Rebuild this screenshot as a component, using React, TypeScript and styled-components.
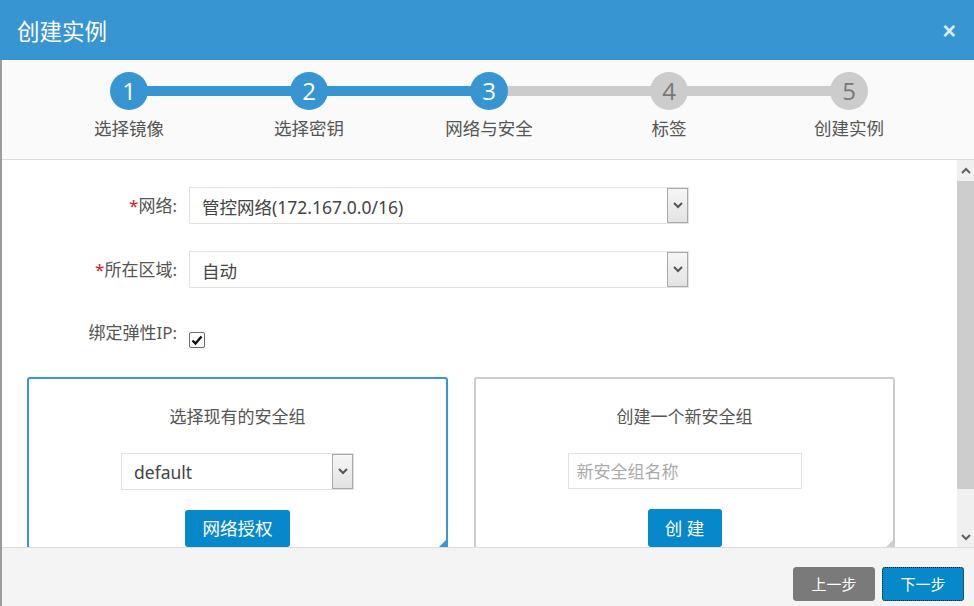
import React from "react";
import styled, { createGlobalStyle, css } from "styled-components";

const GlobalStyle = createGlobalStyle`
  html, body { margin: 0; padding: 0; background: #fff; }
  body {
    font-family: "Noto Sans", "Noto Sans CJK SC", "Liberation Sans", sans-serif;
    color: #555;
  }
  * { box-sizing: border-box; }
`;

const BLUE = "#3795d1";
const BTN = "#0788cb";

const Modal = styled.div`
  width: 974px;
  height: 606px;
  display: flex;
  flex-direction: column;
  overflow: hidden;
  background: #fff;
`;

const Header = styled.header`
  height: 60px;
  flex: none;
  background: ${BLUE};
  display: flex;
  align-items: center;
  justify-content: space-between;
  padding: 0 18px 0 17px;
`;

const Title = styled.h1`
  margin: 0;
  font-size: 22.5px;
  font-weight: 400;
  line-height: 30px;
  color: #fff;
  padding-top: 4px;
`;

const Close = styled.span`
  font-family: "Liberation Sans", "DejaVu Sans", sans-serif;
  font-size: 23px;
  font-weight: 700;
  line-height: 24px;
  color: rgba(255, 255, 255, 0.82);
  padding-top: 2px;
`;

const Main = styled.div`
  flex: 1;
  min-height: 0;
  display: flex;
  flex-direction: column;
  border-left: 2px solid #9c9c9c;
`;

const Steps = styled.nav`
  height: 100px;
  flex: none;
  background: #fafafa;
  border-bottom: 1px solid #dcdcdc;
  display: grid;
  grid-template-columns: repeat(5, 180px);
  padding: 12px 0 0 37px;
`;

const Step = styled.div<{ $line?: "done" | "todo" }>`
  position: relative;
  display: flex;
  flex-direction: column;
  align-items: center;
  ${(p) =>
    p.$line &&
    css`
      &::after {
        content: "";
        position: absolute;
        top: 14px;
        left: 50%;
        width: 100%;
        height: 10px;
        background: ${p.$line === "done" ? BLUE : "#cccccc"};
        z-index: 0;
      }
    `}
`;

const Circle = styled.div<{ $done: boolean }>`
  position: relative;
  z-index: 1;
  width: 38px;
  height: 38px;
  border-radius: 50%;
  background: ${(p) => (p.$done ? BLUE : "#cccccc")};
  color: ${(p) => (p.$done ? "#fff" : "#777")};
  display: flex;
  align-items: center;
  justify-content: center;
  font-family: "Open Sans", "Noto Sans", sans-serif;
  font-size: 24px;
  line-height: 1;
`;

const StepLabel = styled.div`
  margin-top: 6px;
  font-size: 17.5px;
  line-height: 24px;
  color: #555;
  white-space: nowrap;
`;

const Body = styled.div`
  flex: 1;
  min-height: 0;
  display: flex;
  background: #fff;
`;

const Scroll = styled.div`
  flex: 1;
  min-width: 0;
  overflow: hidden;
  padding: 27px 0 0 25px;
`;

const FormRow = styled.div<{ $after: number; $top?: boolean }>`
  display: flex;
  align-items: ${(p) => (p.$top ? "flex-start" : "center")};
  gap: 12px;
  margin-bottom: ${(p) => p.$after}px;
`;

const Label = styled.label`
  width: 150px;
  flex: none;
  text-align: right;
  font-size: 17px;
  line-height: 24px;
  color: #555;
  white-space: nowrap;
`;

const Req = styled.span`
  color: #e4151b;
`;

const SelectBox = styled.div<{ $w: number }>`
  width: ${(p) => p.$w}px;
  height: 37px;
  border: 1px solid #e2e2e2;
  background: #fff;
  display: flex;
  align-items: stretch;
`;

const SelectValue = styled.span`
  flex: 1;
  display: flex;
  align-items: center;
  padding: 2px 0 0 12px;
  font-size: 17.5px;
  color: #444;
  white-space: nowrap;
`;

const SelectArrow = styled.span`
  width: 21px;
  flex: none;
  border: 1px solid #a9a9a9;
  background: linear-gradient(#f6f6f6, #e3e3e3);
  display: flex;
  align-items: center;
  justify-content: center;
`;

const Chevron = ({ up = false, color = "#555" }: { up?: boolean; color?: string }) => (
  <svg width="10" height="7" viewBox="0 0 10 7">
    <polyline
      points={up ? "1,6 5,2 9,6" : "1,1 5,5 9,1"}
      fill="none"
      stroke={color}
      strokeWidth="2"
    />
  </svg>
);

const Select = ({ value, w }: { value: string; w: number }) => (
  <SelectBox $w={w}>
    <SelectValue>{value}</SelectValue>
    <SelectArrow>
      <Chevron />
    </SelectArrow>
  </SelectBox>
);

const Checkbox = styled.span`
  width: 16px;
  height: 16px;
  margin-top: 11px;
  border: 1px solid #6b6b6b;
  border-radius: 2px;
  background: #fff;
  display: flex;
  align-items: center;
  justify-content: center;
`;

const Panels = styled.div`
  display: grid;
  grid-template-columns: 421px 421px;
  gap: 26px;
`;

const Panel = styled.section<{ $active?: boolean }>`
  position: relative;
  height: 172px;
  border: 2px solid ${(p) => (p.$active ? "#3a96d4" : "#cccccc")};
  border-radius: 3px;
  display: flex;
  flex-direction: column;
  align-items: center;
  padding-top: 26px;
`;

const Grip = styled.span<{ $active?: boolean }>`
  position: absolute;
  right: 0;
  bottom: 0;
  width: 0;
  height: 0;
  border-style: solid;
  border-width: 0 0 7px 7px;
  border-color: transparent transparent
    ${(p) => (p.$active ? "#3a96d4" : "#cfcfcf")} transparent;
`;

const PanelTitle = styled.h3`
  margin: 0 0 24px;
  font-size: 17px;
  font-weight: 400;
  line-height: 24px;
  color: #555;
`;

const TextInput = styled.input`
  width: 234px;
  height: 36px;
  border: 1px solid #e2e2e2;
  padding: 0 8px;
  font-family: inherit;
  font-size: 17px;
  color: #444;
  outline: none;
  &::placeholder { color: #aaa; }
`;

const ActionButton = styled.button<{ $w: number }>`
  margin-top: 20px;
  width: ${(p) => p.$w}px;
  height: 38px;
  border: none;
  border-radius: 3px;
  background: ${BTN};
  color: #fff;
  font-family: inherit;
  font-size: 17.5px;
  line-height: 24px;
  padding: 0 0 1px;
`;

const Scrollbar = styled.div`
  width: 17px;
  flex: none;
  background: #f0f0f0;
  display: flex;
  flex-direction: column;
`;

const ScrollBtn = styled.div<{ $h: number }>`
  height: ${(p) => p.$h}px;
  flex: none;
  display: flex;
  align-items: center;
  justify-content: center;
`;

const ScrollTrack = styled.div`
  flex: 1;
`;

const Thumb = styled.div`
  height: 308px;
  background: #cdcdcd;
`;

const Footer = styled.footer`
  height: 59px;
  flex: none;
  background: #f4f4f4;
  border-top: 1px solid #dcdcdc;
  display: flex;
  justify-content: flex-end;
  align-items: flex-start;
  gap: 7px;
  padding: 19px 10px 0 0;
`;

const FooterButton = styled.button<{ $primary?: boolean }>`
  width: 82px;
  height: 34px;
  border-radius: 3px;
  border: 1px ${(p) => (p.$primary ? "dotted #1a1a1a" : "solid #7a7a7a")};
  background: ${(p) => (p.$primary ? BTN : "#7a7a7a")};
  color: #fff;
  font-family: inherit;
  font-size: 15px;
  line-height: 20px;
  padding: 0;
`;

const steps = ["选择镜像", "选择密钥", "网络与安全", "标签", "创建实例"];
const current = 3;

export default function App() {
  return (
    <>
      <GlobalStyle />
      <Modal>
        <Header>
          <Title>创建实例</Title>
          <Close>×</Close>
        </Header>
        <Main>
          <Steps>
            {steps.map((s, i) => {
              const n = i + 1;
              const line = n < steps.length ? (n < current ? "done" : "todo") : undefined;
              return (
                <Step key={s} $line={line}>
                  <Circle $done={n <= current}>{n}</Circle>
                  <StepLabel>{s}</StepLabel>
                </Step>
              );
            })}
          </Steps>
          <Body>
            <Scroll>
              <FormRow $after={27}>
                <Label>
                  <Req>*</Req>网络:
                </Label>
                <Select value="管控网络(172.167.0.0/16)" w={500} />
              </FormRow>
              <FormRow $after={33}>
                <Label>
                  <Req>*</Req>所在区域:
                </Label>
                <Select value="自动" w={500} />
              </FormRow>
              <FormRow $after={29} $top>
                <Label>绑定弹性IP:</Label>
                <Checkbox>
                  <svg width="12" height="11" viewBox="0 0 12 11">
                    <polyline
                      points="1.5,5.5 4.5,8.5 10.5,1.5"
                      fill="none"
                      stroke="#111"
                      strokeWidth="2.4"
                    />
                  </svg>
                </Checkbox>
              </FormRow>
              <Panels>
                <Panel $active>
                  <PanelTitle>选择现有的安全组</PanelTitle>
                  <Select value="default" w={233} />
                  <ActionButton $w={105}>网络授权</ActionButton>
                  <Grip $active />
                </Panel>
                <Panel>
                  <PanelTitle>创建一个新安全组</PanelTitle>
                  <TextInput placeholder="新安全组名称" />
                  <ActionButton $w={74}>创 建</ActionButton>
                  <Grip />
                </Panel>
              </Panels>
            </Scroll>
            <Scrollbar>
              <ScrollBtn $h={21}>
                <Chevron up color="#606060" />
              </ScrollBtn>
              <ScrollTrack>
                <Thumb />
              </ScrollTrack>
              <ScrollBtn $h={20}>
                <Chevron color="#606060" />
              </ScrollBtn>
            </Scrollbar>
          </Body>
          <Footer>
            <FooterButton>上一步</FooterButton>
            <FooterButton $primary>下一步</FooterButton>
          </Footer>
        </Main>
      </Modal>
    </>
  );
}
